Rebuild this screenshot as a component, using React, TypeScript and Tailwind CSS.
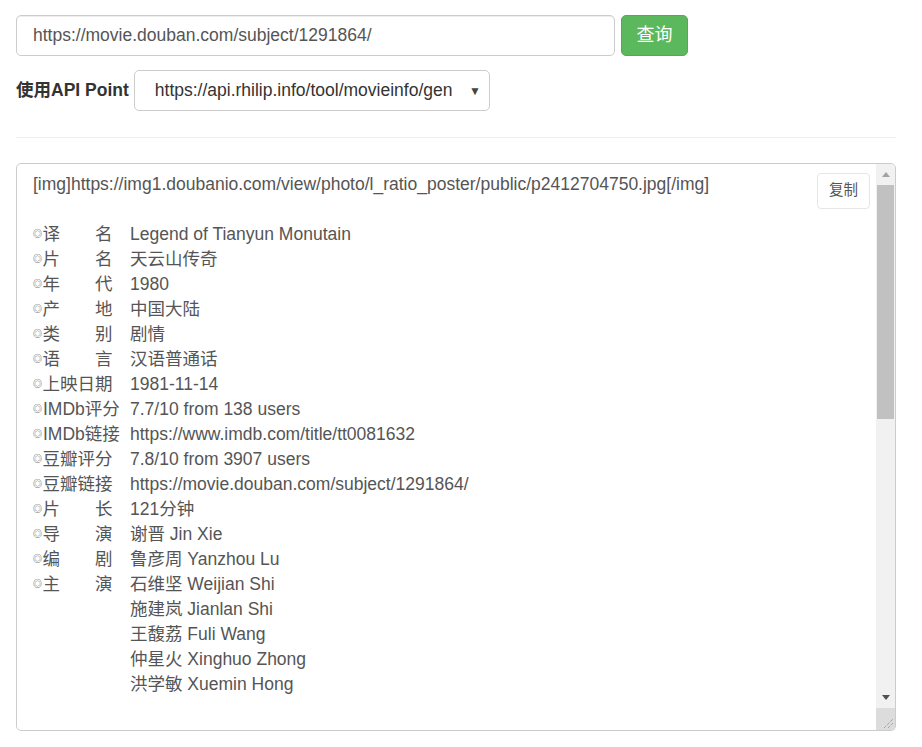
import React from 'react';

const FONT = { fontFamily: '"Liberation Sans", Arial, "Noto Sans CJK SC", sans-serif' };

const rows: [string, string][] = [
  ['译　　名　', 'Legend of Tianyun Monutain'],
  ['片　　名　', '天云山传奇'],
  ['年　　代　', '1980'],
  ['产　　地　', '中国大陆'],
  ['类　　别　', '剧情'],
  ['语　　言　', '汉语普通话'],
  ['上映日期　', '1981-11-14'],
  ['IMDb评分  ', '7.7/10 from 138 users'],
  ['IMDb链接  ', 'https://www.imdb.com/title/tt0081632'],
  ['豆瓣评分　', '7.8/10 from 3907 users'],
  ['豆瓣链接　', 'https://movie.douban.com/subject/1291864/'],
  ['片　　长　', '121分钟'],
  ['导　　演　', '谢晋 Jin Xie'],
  ['编　　剧　', '鲁彦周 Yanzhou Lu'],
  ['主　　演　', '石维坚 Weijian Shi'],
];

const cast = ['施建岚 Jianlan Shi', '王馥荔 Fuli Wang', '仲星火 Xinghuo Zhong', '洪学敏 Xuemin Hong'];

const Line: React.FC<{ label?: string; value: string }> = ({ label, value }) => (
  <div className="flex h-[25px] items-center whitespace-pre">
    <div className="flex w-[97px] shrink-0 items-center">
      {label && (
        <>
          <span className="inline-block w-[10px] text-[9px] leading-none text-[#444]">◎</span>
          <span>{label}</span>
        </>
      )}
    </div>
    <span>{value}</span>
  </div>
);

export default function App() {
  return (
    <div className="w-[922px] bg-white px-4 pt-[15px] text-[17.5px] text-[#333]" style={FONT}>
      <div className="w-[880px]">
        {/* query row */}
        <div className="flex gap-[6px]">
          <div className="flex h-[41px] w-[599px] items-center rounded-[5px] border border-[#ccc] pl-4 text-[#555] shadow-[inset_0_1px_1px_rgba(0,0,0,0.075)]">
            https://movie.douban.com/subject/1291864/
          </div>
          <button className="flex h-[41px] w-[67px] items-center justify-center rounded-[5px] border border-[#4cae4c] bg-[#5cb85c] text-[18px] text-white">
            查询
          </button>
        </div>

        {/* api point row */}
        <div className="mt-[14px] flex items-center gap-[5px]">
          <span className="font-bold">使用API Point</span>
          <div className="flex h-[41px] w-[356px] items-center justify-between rounded-[5px] border border-[#ccc] pl-[20px] pr-[8px] text-[#333]">
            <span>https://api.rhilip.info/tool/movieinfo/gen</span>
            <span className="text-[12px] text-[#444]">▼</span>
          </div>
        </div>

        <div className="mt-[26px] h-px bg-[#eee]" />

        {/* output */}
        <div className="relative mt-[25px] flex h-[568px] rounded-[5px] border border-[#ccc] text-[#555]">
          <div className="flex-1 overflow-hidden pl-4 pt-[8px]">
            <div className="flex h-[25px] items-center whitespace-pre">
              [img]https://img1.doubanio.com/view/photo/l_ratio_poster/public/p2412704750.jpg[/img]
            </div>
            <div className="h-[25px]" />
            {rows.map(([l, v]) => (
              <Line key={l + v} label={l} value={v} />
            ))}
            {cast.map(c => (
              <Line key={c} value={c} />
            ))}
          </div>

          <button className="absolute right-[25px] top-[9px] flex h-[36px] w-[53px] items-center justify-center rounded-[4px] border border-[#e6e6e6] bg-white text-[14.5px] text-[#555]">
            复制
          </button>

          {/* scrollbar */}
          <div className="flex w-[19px] flex-col rounded-tr-[4px] bg-[#f1f1f1]">
            <div className="flex h-[21px] items-center justify-center">
              <div className="h-0 w-0 border-x-[4.5px] border-b-[5px] border-x-transparent border-b-[#a3a3a3]" />
            </div>
            <div className="mx-[1px] h-[234px] bg-[#c1c1c1]" />
            <div className="flex-1" />
            <div className="flex h-[21px] items-center justify-center">
              <div className="h-0 w-0 border-x-[4.5px] border-t-[5px] border-x-transparent border-t-[#505050]" />
            </div>
            <div className="flex h-[22px] items-end justify-end bg-[#dcdcdc] p-[2px]">
              <svg width="10" height="10" viewBox="0 0 10 10">
                <line x1="1" y1="10" x2="10" y2="1" stroke="#777" strokeWidth="0.8" strokeDasharray="1 1" />
                <line x1="5" y1="10" x2="10" y2="5" stroke="#777" strokeWidth="0.8" strokeDasharray="1 1" />
              </svg>
            </div>
          </div>
        </div>
      </div>
    </div>
  );
}
